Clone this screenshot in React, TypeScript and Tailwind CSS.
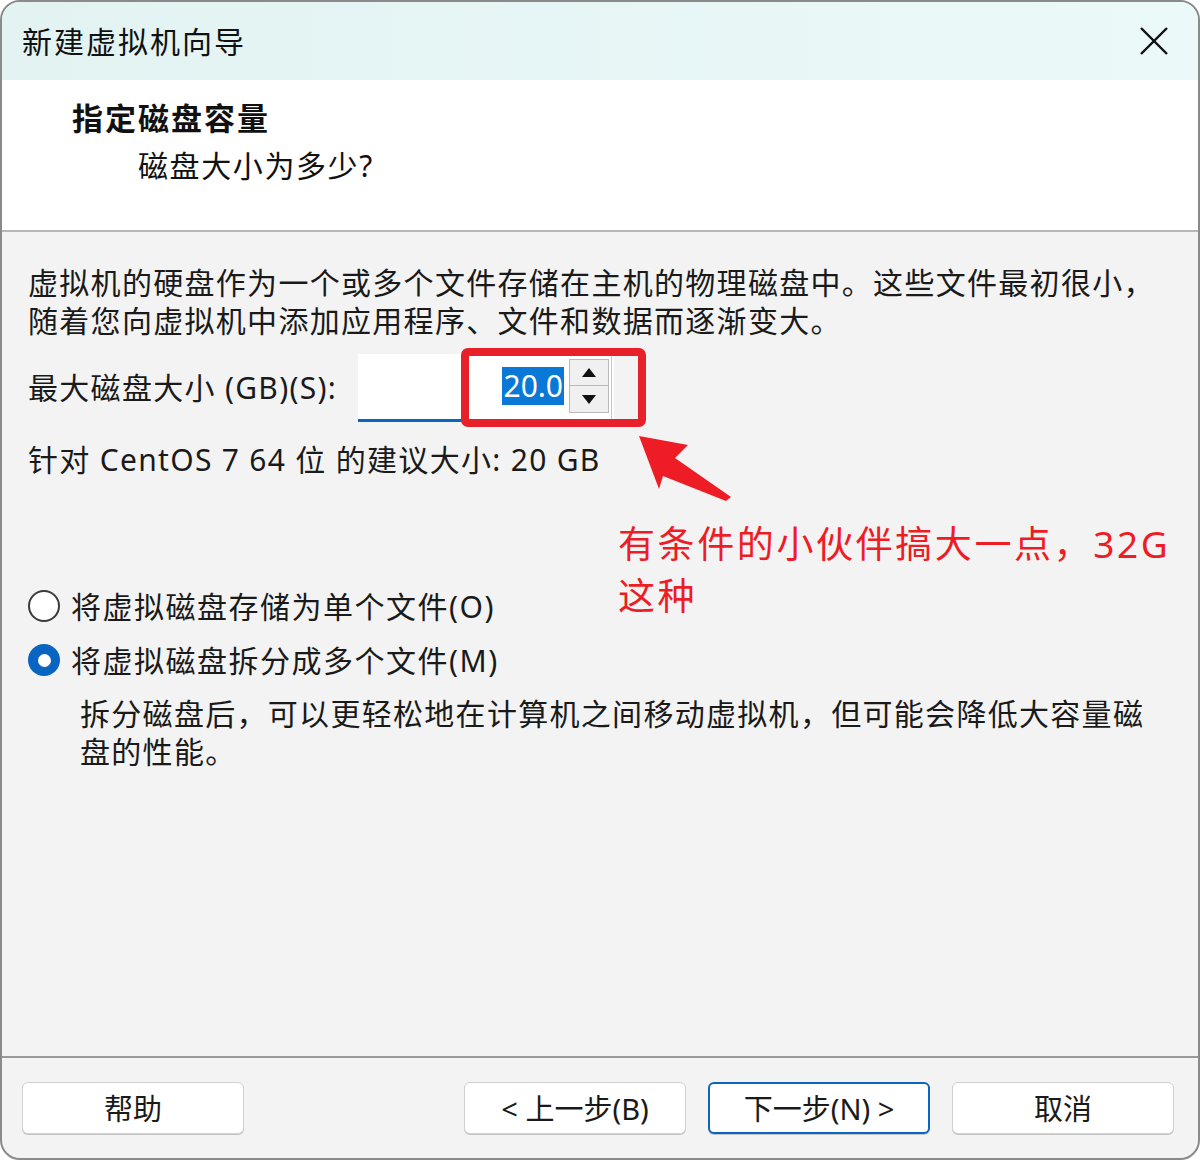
import React from 'react';

const font = { fontFamily: '"Noto Sans", "Noto Sans CJK SC", sans-serif' };

const WizardButton: React.FC<{ label: string; primary?: boolean; className?: string }> = ({ label, primary, className }) => (
  <button
    className={
      'h-[52px] w-[222px] rounded-[6px] bg-white text-[29px] text-[#1a1a1a] leading-none shadow-[0_1px_0_#c4c4c4] ' +
      (primary ? 'border-2 border-[#0a64c2]' : 'border border-[#d2d2d2]') +
      (className ? ' ' + className : '')
    }
  >
    {label}
  </button>
);

const Radio: React.FC<{ checked?: boolean; label: string }> = ({ checked, label }) => (
  <div className="flex h-[44px] items-center">
    {checked ? (
      <span className="flex h-[32px] w-[32px] items-center justify-center rounded-full bg-[#0a64c2]">
        <span className="h-[13px] w-[13px] rounded-full bg-white" />
      </span>
    ) : (
      <span className="h-[32px] w-[32px] rounded-full border-2 border-[#3a3a3a] bg-white" />
    )}
    <span className="ml-[11px] text-[30px] tracking-[1.5px] text-[#1a1a1a]">{label}</span>
  </div>
);

const Spinner: React.FC = () => (
  <div className="flex w-[40px] flex-col border border-[#b9b9b9] bg-[#f0f0f0]">
    <div className="flex h-[26px] items-center justify-center border-b border-[#b9b9b9]">
      <svg width="14" height="9" viewBox="0 0 14 9"><polygon points="7,0 14,9 0,9" fill="#111" /></svg>
    </div>
    <div className="flex h-[26px] items-center justify-center">
      <svg width="14" height="9" viewBox="0 0 14 9"><polygon points="0,0 14,0 7,9" fill="#111" /></svg>
    </div>
  </div>
);

export default function App() {
  return (
    <div className="h-[1160px] w-[1200px] bg-white" style={font}>
      <div className="flex h-full w-full flex-col overflow-hidden rounded-[20px] border-2 border-[#8a8a8a] bg-[#f3f3f3]">
        {/* title bar */}
        <div className="flex h-[78px] shrink-0 items-center justify-between bg-gradient-to-r from-[#e2f3f2] to-[#ecf9f9] pl-[20px] pr-[30px]">
          <span className="text-[30px] tracking-[2px] text-[#111]">新建虚拟机向导</span>
          <svg width="28" height="28" viewBox="0 0 28 28" stroke="#111" strokeWidth="2.4">
            <line x1="1" y1="1" x2="27" y2="27" />
            <line x1="27" y1="1" x2="1" y2="27" />
          </svg>
        </div>

        {/* header */}
        <div className="h-[152px] shrink-0 border-b-2 border-[#b8b8b8] bg-white pt-[16px]">
          <div className="pl-[70px] text-[31px] font-bold leading-[44px] tracking-[2px] text-[#111]">指定磁盘容量</div>
          <div className="pl-[136px] pt-[4px] text-[30px] leading-[44px] tracking-[1.6px] text-[#111]">磁盘大小为多少?</div>
        </div>

        {/* body */}
        <div className="relative flex-1 pl-[26px] pt-[32px] tracking-[1.3px] text-[#1a1a1a]">
          <p className="text-[30px] leading-[38px]">
            虚拟机的硬盘作为一个或多个文件存储在主机的物理磁盘中。这些文件最初很小，
            <br />
            随着您向虚拟机中添加应用程序、文件和数据而逐渐变大。
          </p>

          <div className="mt-[8px] flex h-[79px] items-center">
            <span className="w-[330px] text-[30px]">最大磁盘大小 (GB)(S):</span>
            <div className="relative flex h-[68px] w-[256px] items-center justify-end border-b-[3px] border-[#0a64c2] bg-white pr-[2px] tracking-normal">
              <span className="mr-[5px] bg-[#0a78d7] px-[1px] text-[30px] leading-[38px] text-white">20.0</span>
              <Spinner />
              <div className="ml-[2px] h-full w-[1px] bg-[#c8c8c8]" />
              <div className="absolute left-[103px] top-[-6px] h-[79px] w-[185px] rounded-[7px] border-[8px] border-[#e8202a]" />
            </div>
          </div>

          <p className="mt-[14px] text-[30px] leading-[38px]">针对 CentOS 7 64 位 的建议大小: 20 GB</p>

          <div className="mt-[105px]">
            <Radio label="将虚拟磁盘存储为单个文件(O)" />
            <div className="mt-[10px]">
              <Radio checked label="将虚拟磁盘拆分成多个文件(M)" />
            </div>
          </div>
          <p className="mt-[13px] pl-[52px] pr-[10px] text-[30px] leading-[38px]">
            拆分磁盘后，可以更轻松地在计算机之间移动虚拟机，但可能会降低大容量磁
            <br />
            盘的性能。
          </p>

          {/* annotation */}
          <svg className="absolute left-[630px] top-[200px]" width="110" height="72" viewBox="630 432 110 72">
            <polygon points="637,436 686,445 673,458 729,497 724,501 661,476 657,489" fill="#ee1c25" />
          </svg>
          <div className="absolute left-[616px] top-[286px] text-[37px] leading-[52px] tracking-[2.6px] text-[#ee1c25]">
            有条件的小伙伴搞大一点，32G
            <br />
            这种
          </div>
        </div>

        {/* footer */}
        <div className="flex h-[102px] shrink-0 items-start border-t-2 border-[#9a9a9a] pl-[20px] pr-[24px] pt-[24px]">
          <WizardButton label="帮助" />
          <div className="flex-1" />
          <WizardButton label="< 上一步(B)" />
          <WizardButton label="下一步(N) >" primary className="ml-[22px]" />
          <WizardButton label="取消" className="ml-[22px]" />
        </div>
      </div>
    </div>
  );
}
